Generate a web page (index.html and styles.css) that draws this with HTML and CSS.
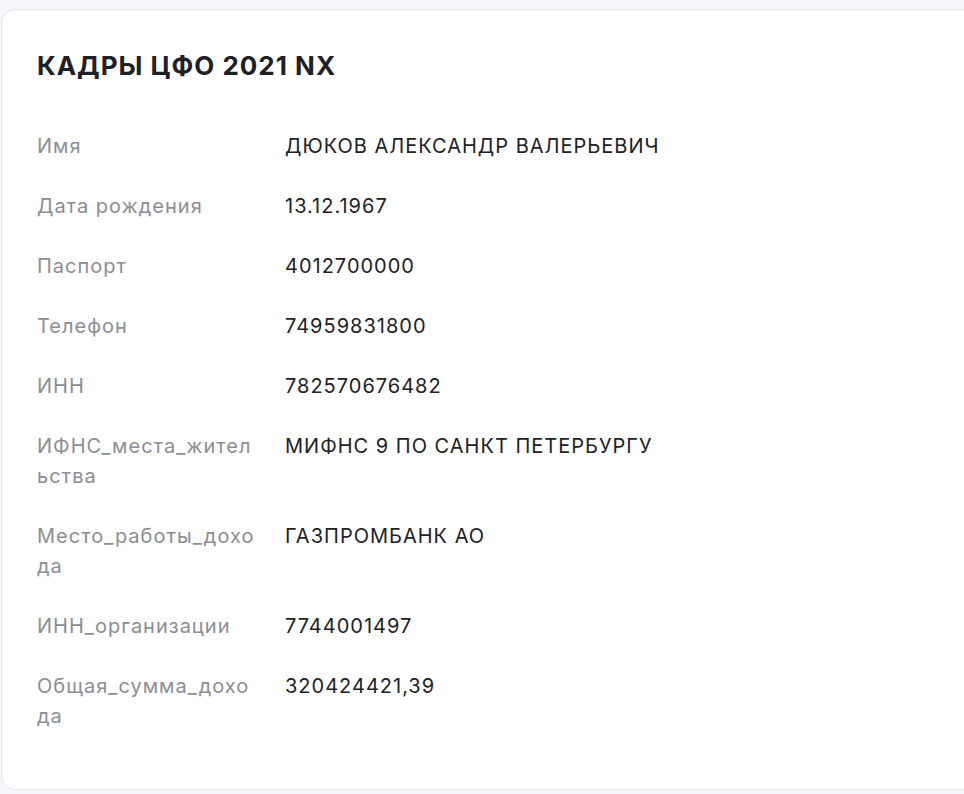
FILE: index.html
```
<!DOCTYPE html>
<html lang="ru">
<head>
    <meta charset="UTF-8">
    <meta name="viewport" content="width=device-width, initial-scale=1.0">
    <title>Кадры ЦФО 2021 NX</title>
    <link rel="stylesheet" href="styles.css">
</head>
<body>

<div class="card">
    <h1 class="card-title">КАДРЫ ЦФО 2021 NX</h1>

    <dl class="info-list">
        <div class="info-row">
            <dt>Имя</dt>
            <dd>ДЮКОВ АЛЕКСАНДР ВАЛЕРЬЕВИЧ</dd>
        </div>
        <div class="info-row">
            <dt>Дата рождения</dt>
            <dd>13.12.1967</dd>
        </div>
        <div class="info-row">
            <dt>Паспорт</dt>
            <dd>4012700000</dd>
        </div>
        <div class="info-row">
            <dt>Телефон</dt>
            <dd>74959831800</dd>
        </div>
        <div class="info-row">
            <dt>ИНН</dt>
            <dd>782570676482</dd>
        </div>
        <div class="info-row">
            <dt>ИФНС_места_жительства</dt>
            <dd>МИФНС 9 ПО САНКТ ПЕТЕРБУРГУ</dd>
        </div>
        <div class="info-row">
            <dt>Место_работы_дохода</dt>
            <dd>ГАЗПРОМБАНК АО</dd>
        </div>
        <div class="info-row">
            <dt>ИНН_организации</dt>
            <dd>7744001497</dd>
        </div>
        <div class="info-row">
            <dt>Общая_сумма_дохода</dt>
            <dd>320424421,39</dd>
        </div>
    </dl>
</div>

</body>
</html>
```

FILE: styles.css
```
body {
    background-color: #f5f7fb;
    font-family: 'Inter', 'Noto Sans', sans-serif;
    margin: 0;
    padding: 9px 0 0 1px;
    overflow: hidden;
}

.card {
    background-color: #fff;
    border: 1px solid #e4e6ea;
    border-radius: 14px;
    width: 1000px;
    height: 781px;
    box-sizing: border-box;
    padding: 36px 35px 0 35px;
}

.card-title {
    margin: 0;
    font-size: 26px;
    line-height: 40px;
    font-weight: 700;
    color: #1d2026;
    letter-spacing: 1px;
}

.info-list {
    margin: 30px 0 0 0;
    padding: 0;
}

.info-row {
    display: grid;
    grid-template-columns: 248px 1fr;
    padding: 15px 0;
    font-size: 20px;
    line-height: 30px;
    letter-spacing: 1px;
}

.info-row dt {
    color: #8b8e94;
    padding-right: 28px;
    word-break: break-all;
}

.info-row dd {
    margin: 0;
    color: #202226;
}
```
